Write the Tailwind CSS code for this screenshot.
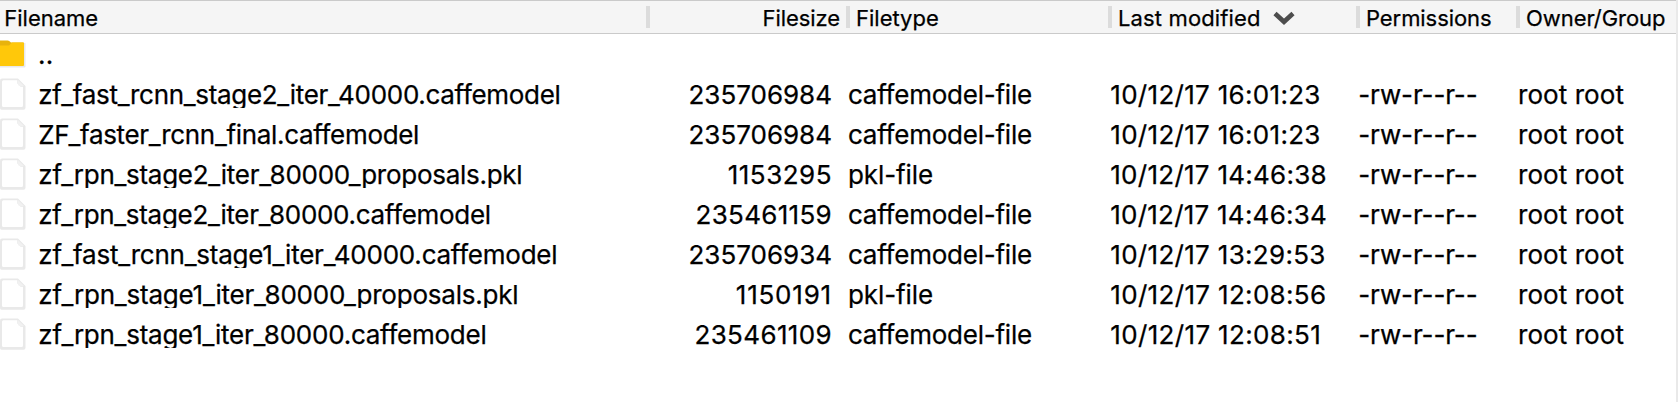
<!DOCTYPE html>
<html lang="en">
<head>
<meta charset="utf-8">
<title>Remote files</title>
<script src="https://cdn.jsdelivr.net/npm/@tailwindcss/browser@4"></script>
</head>
<body class="bg-white">
<div class="flex h-[402px] w-[1678px] overflow-hidden bg-white font-['Inter',sans-serif] text-black [-webkit-text-stroke:0.25px_black]">
  <div class="flex w-[1676px] flex-col">
    <div class="flex h-[34px] border-y border-[#cacaca] bg-[#f5f5f5] pt-[5px] text-[22px]">
      <div class="w-[646px] pl-[4.3px]"><div class="-mt-[5px] leading-[34px] tracking-[-0.013px]">Filename</div></div>
      <div class="flex w-[200px]"><i class="h-[22px] w-1 bg-[#dcdcdc]"></i><div class="-mt-[5px] grow pr-[6px] text-right leading-[34px] tracking-[-0.077px]">Filesize</div></div>
      <div class="flex w-[262px]"><i class="h-[22px] w-1 bg-[#dcdcdc]"></i><div class="-mt-[5px] pl-[6px] leading-[34px]">Filetype</div></div>
      <div class="flex w-[248px]"><i class="h-[22px] w-1 bg-[#dcdcdc]"></i><div class="-mt-[5px] pl-[6px] leading-[34px] tracking-[0.138px]">Last modified</div>
        <svg class="ml-[12px] mt-[5px] h-[15px] w-[22px]" viewBox="0 0 22 15"><path d="M2 2.5 L11 10.8 L20 2.5" fill="none" stroke="#4d4d4d" stroke-width="4.6"/></svg>
      </div>
      <div class="flex w-[160px]"><i class="h-[22px] w-1 bg-[#dcdcdc]"></i><div class="-mt-[5px] pl-[6px] leading-[34px] tracking-[-0.073px]">Permissions</div></div>
      <div class="flex w-[160px]"><i class="h-[22px] w-1 bg-[#dcdcdc]"></i><div class="-mt-[5px] pl-[6px] leading-[34px] tracking-[-0.065px]">Owner/Group</div></div>
    </div>
    <div class="flex h-10 text-[26px]">
      <svg class="h-10 w-[38px]" viewBox="0 0 38 40"><path d="M0 9H25.5V32.5Q25.5 33.5 24.5 33.5H0Z" fill="#e9e9ea"/><path d="M0 6.5H7.5Q8.7 6.5 9.5 7.3L11 8.5H23Q24 8.5 24 9.5V31H0Z" fill="#e8b30c"/><path d="M0 11.5H9L12 8.5H23Q24 8.5 24 9.5V31Q24 32 23 32H0Z" fill="#ffc80a"/></svg>
      <span class="h-[34px] leading-[41px] tracking-[0.31px]">..</span>
    </div>
    <div id="rows" class="flex flex-col text-[26px] leading-[41px] whitespace-pre"></div>
  </div>
  <div class="w-[2px] bg-[#e9e9e9]"></div>
</div>
<template id="row">
  <div class="flex h-10">
    <svg class="h-10 w-[38.3px]" viewBox="0 0 38.3 40"><path d="M2 4.5H18L25.5 12V33.5Q25.5 35.8 23.5 35.8H1.5Q0 35.8 0 34V6.5Q0 4.5 2 4.5Z" fill="#e9e9e9"/><path d="M3.5 6.3H17.3V9.5L20.5 12.7H23V31.5Q23 33 21.5 33H3.5Q2 33 2 31.5V7.8Q2 6.3 3.5 6.3Z" fill="#fff"/><path d="M18 6L24 12H20Q18 12 18 10Z" fill="#f1f1f1"/></svg>
    <div class="h-[34px] w-[609.7px] overflow-hidden"></div>
    <div class="flex h-[34px] w-[200px] justify-end pr-4"><span></span></div>
    <div class="h-[34px] w-[262px] overflow-hidden"></div>
    <div class="h-[34px] w-[248px] pl-[0.3px]"></div>
    <div class="h-[34px] w-[160px] pl-[0.3px] tracking-[-0.133px]">-rw-r--r--</div>
    <div class="h-[34px] tracking-[0.064px]">root root</div>
  </div>
</template>
<script>
// [name, spacing, size, spacing, type, spacing, modified, spacing]
const files = [
  ["zf_fast_rcnn_stage2_iter_40000.caffemodel", -0.310, "235706984", -0.008, "caffemodel-file", -0.232, "10/12/17 16:01:23", 0.300],
  ["ZF_faster_rcnn_final.caffemodel", -0.320, "235706984", -0.008, "caffemodel-file", -0.232, "10/12/17 16:01:23", 0.300],
  ["zf_rpn_stage2_iter_80000_proposals.pkl", -0.274, "1153295", 0.501, "pkl-file", -0.1, "10/12/17 14:46:38", 0.264],
  ["zf_rpn_stage2_iter_80000.caffemodel", -0.303, "235461159", 0.30, "caffemodel-file", -0.232, "10/12/17 14:46:34", 0.226],
  ["zf_fast_rcnn_stage1_iter_40000.caffemodel", -0.236, "235706934", -0.005, "caffemodel-file", -0.232, "10/12/17 13:29:53", 0.303],
  ["zf_rpn_stage1_iter_80000_proposals.pkl", -0.216, "1150191", 0.8, "pkl-file", -0.1, "10/12/17 12:08:56", 0.328],
  ["zf_rpn_stage1_iter_80000.caffemodel", -0.251, "235461109", 0.351, "caffemodel-file", -0.232, "10/12/17 12:08:51", 0.340]
];
const template = document.getElementById("row");
for (const f of files) {
  const row = template.content.cloneNode(true).firstElementChild;
  const c = row.children;
  [c[1], c[2].firstElementChild, c[3], c[4]].forEach((cell, i) => {
    cell.textContent = f[i * 2];
    cell.style.letterSpacing = f[i * 2 + 1] + "px";
  });
  document.getElementById("rows").append(row);
}
</script>
</body>
</html>
